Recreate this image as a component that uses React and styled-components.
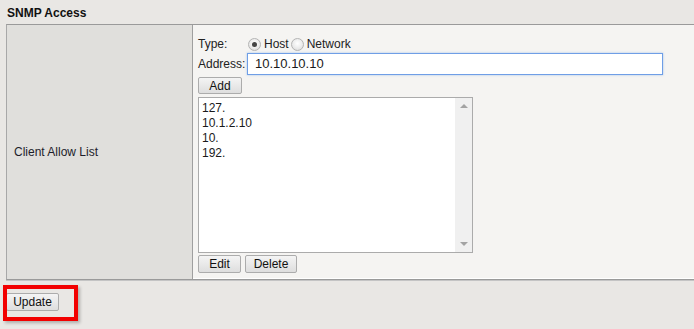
import React from "react";
import styled, { createGlobalStyle } from "styled-components";

const Global = createGlobalStyle`
  html, body { margin: 0; padding: 0; background: #e9e7e4; }
  body { font-family: "Liberation Sans", Arial, sans-serif; font-size: 12px; color: #222; }
`;

const Page = styled.div`
  width: 694px;
  height: 329px;
  overflow: hidden;
  background: #e9e7e4;
`;

const Header = styled.div`
  height: 24px;
  box-sizing: border-box;
  padding: 6px 0 0 7px;
  font-weight: bold;
  font-size: 12px;
  line-height: 14px;
  color: #111;
`;

const Table = styled.div`
  margin-left: 6px;
  display: grid;
  grid-template-columns: 186px 1fr;
  height: 256px;
  box-sizing: border-box;
  border-top: 1px solid #9a9a9a;
  border-left: 1px solid #a8a8a8;
  border-bottom: 1px solid #9a9a9a;
  box-shadow: 0 1px 0 #c4c4c4;
`;

const LabelCell = styled.div`
  background: #e0dfdc;
  border-right: 1px solid #9f9f9f;
  display: flex;
  align-items: center;
  padding-left: 7px;
  color: #1d1d2a;
`;

const ValueCell = styled.div`
  background: #f5f4f2;
  padding: 11px 0 0 5px;
  display: flex;
  flex-direction: column;
  box-shadow: inset 0 -1px 0 #ffffff;
`;

const FieldRow = styled.div`
  display: flex;
  align-items: center;
  height: ${(p) => p.h}px;
  margin-top: ${(p) => p.mt || 0}px;
`;

const FieldLabel = styled.span`
  width: 50px;
  flex: none;
`;

const Radio = styled.span`
  width: 13px;
  height: 13px;
  box-sizing: border-box;
  border-radius: 50%;
  border: 1px solid #b4b4b4;
  background: radial-gradient(circle at 50% 40%, #ffffff 0%, #e9e9e9 60%, #d2d2d2 100%);
  margin-left: ${(p) => p.ml || 0}px;
  margin-right: 3px;
  display: inline-flex;
  align-items: center;
  justify-content: center;
  &::after {
    content: "";
    width: 5px;
    height: 5px;
    border-radius: 50%;
    background: ${(p) => (p.checked ? "#444" : "transparent")};
  }
`;

const RadioText = styled.span`
  margin-right: 2px;
`;

const TextInput = styled.div`
  width: 416px;
  height: 22px;
  margin-left: -1px;
  box-sizing: border-box;
  border: 1px solid #6f9ee6;
  box-shadow: 0 0 2px rgba(110, 160, 230, 0.6);
  background: #fff;
  font-size: 13px;
  line-height: 20px;
  padding-left: 7px;
  color: #1a1a1a;
`;

const Button = styled.div`
  display: inline-flex;
  align-items: center;
  justify-content: center;
  box-sizing: border-box;
  width: ${(p) => p.w}px;
  height: ${(p) => p.h || 17}px;
  border: 1px solid #acacac;
  border-radius: 2px;
  background: linear-gradient(#f4f4f4, #dedede);
  color: #111;
  font-size: 12px;
  margin-right: ${(p) => p.mr || 0}px;
`;

const ListBox = styled.div`
  margin-top: 3px;
  width: 275px;
  height: 156px;
  box-sizing: border-box;
  border: 1px solid #ababab;
  background: #fff;
  display: flex;
`;

const ListItems = styled.div`
  flex: 1;
  padding: 3px 0 0 3px;
  line-height: 15px;
  color: #1a1a1a;
`;

const ScrollBar = styled.div`
  width: 17px;
  background: #f0f0f0;
  display: flex;
  flex-direction: column;
  justify-content: space-between;
  align-items: center;
  padding: 6px 0;
  box-sizing: border-box;
`;

const Arrow = styled.span`
  width: 0;
  height: 0;
  border-left: 4px solid transparent;
  border-right: 4px solid transparent;
  ${(p) => (p.up ? "border-bottom: 4px solid #a3a3a3;" : "border-top: 4px solid #a3a3a3;")}
`;

const ButtonRow = styled.div`
  display: flex;
  margin-top: 2px;
`;

const Footer = styled.div`
  position: relative;
  padding: 13px 0 0 6px;
`;

const Highlight = styled.div`
  position: absolute;
  left: 3px;
  top: 5px;
  width: 75px;
  height: 36px;
  box-sizing: border-box;
  border: 4px solid #f20000;
  box-shadow: 2px 2px 3px rgba(0, 0, 0, 0.25);
  pointer-events: none;
`;

export default function App() {
  return (
    <Page>
      <Global />
      <Header>SNMP Access</Header>
      <Table>
        <LabelCell>Client Allow List</LabelCell>
        <ValueCell>
          <FieldRow h={16}>
            <FieldLabel>Type:</FieldLabel>
            <Radio checked />
            <RadioText>Host</RadioText>
            <Radio />
            <RadioText>Network</RadioText>
          </FieldRow>
          <FieldRow h={22} mt={1}>
            <FieldLabel>Address:</FieldLabel>
            <TextInput>10.10.10.10</TextInput>
          </FieldRow>
          <FieldRow h={17} mt={2}>
            <Button w={44}>Add</Button>
          </FieldRow>
          <ListBox>
            <ListItems>
              <div>127.</div>
              <div>10.1.2.10</div>
              <div>10.</div>
              <div>192.</div>
            </ListItems>
            <ScrollBar>
              <Arrow up />
              <Arrow />
            </ScrollBar>
          </ListBox>
          <ButtonRow>
            <Button w={43} h={18} mr={4}>Edit</Button>
            <Button w={52} h={18}>Delete</Button>
          </ButtonRow>
        </ValueCell>
      </Table>
      <Footer>
        <Button w={53} h={18}>Update</Button>
        <Highlight />
      </Footer>
    </Page>
  );
}
